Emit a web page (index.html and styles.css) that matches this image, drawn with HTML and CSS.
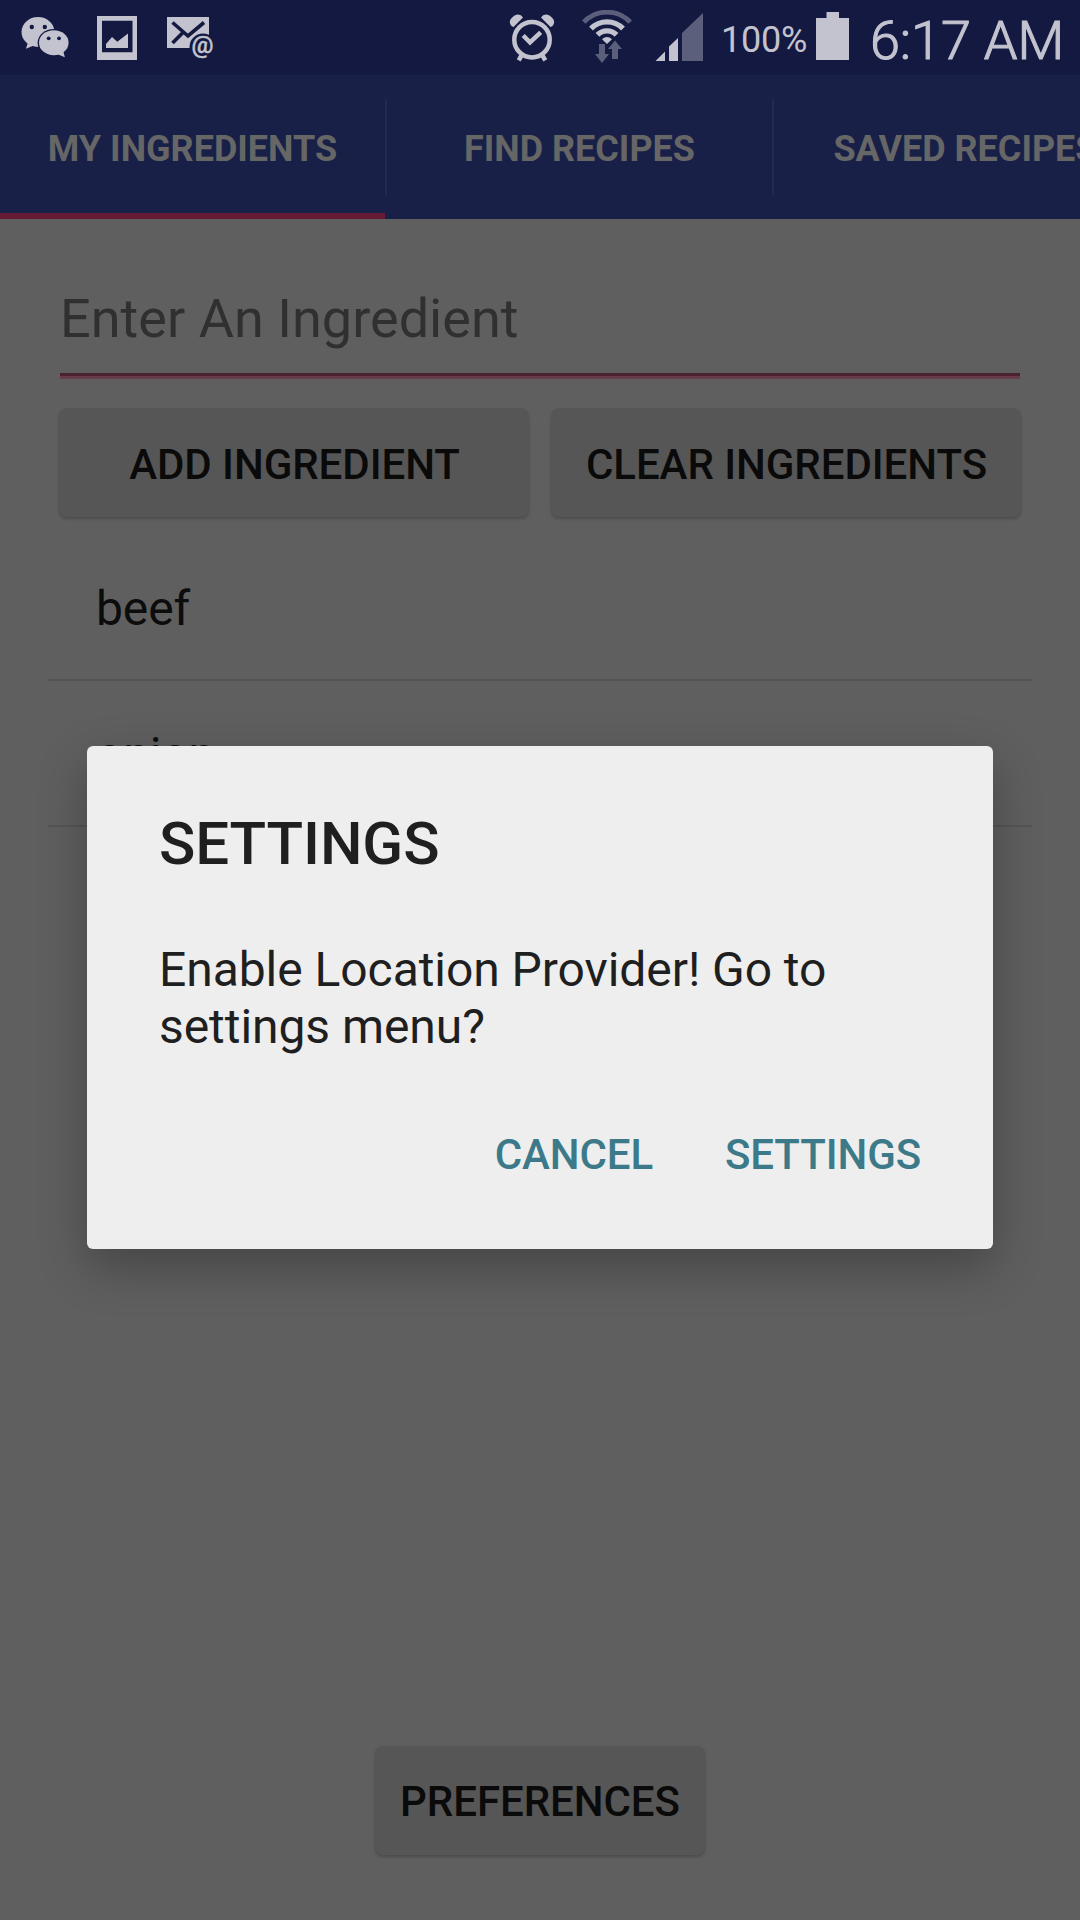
FILE: index.html
```html
<!DOCTYPE html>
<html lang="en">
<head>
<meta charset="utf-8">
<title>My Ingredients</title>
<link rel="stylesheet" href="styles.css">
</head>
<body>
<div class="screen">
  <header class="status-bar">
    <div class="status-left">
      <svg class="icon" width="50" height="44" viewBox="21 17 50 44">
        <ellipse cx="38" cy="33" rx="16.5" ry="15"/>
        <path d="M28 43 L26 49.7 L35 46Z"/>
        <g class="cut"><circle cx="31.8" cy="28" r="2.2"/><circle cx="44.8" cy="28" r="2.2"/><ellipse cx="53.8" cy="43.7" rx="16.2" ry="13.8"/></g>
        <ellipse cx="53.8" cy="43.7" rx="14.8" ry="12.5"/>
        <path d="M57 55 L64.8 58.2 L63 51Z"/>
        <g class="cut"><circle cx="48.7" cy="39.3" r="1.9"/><circle cx="59" cy="39.3" r="1.9"/></g>
      </svg>
      <svg class="icon" width="40" height="44" viewBox="97 16 40 44">
        <path fill-rule="evenodd" d="M97 16H137V60H97ZM102 20.700V52.300H132.500V20.700Z"/>
        <path d="M106 48V44L112 37L117.300 41.800L128 33.500V48Z"/>
      </svg>
      <svg class="icon mail" width="48" height="44" viewBox="167 16 48 44">
        <path d="M167 17H209V48H167Z"/>
        <path class="cut-line" d="M172.500 22.500L188 36L204 22.500M172.500 43L183 32.500"/>
        <circle class="cut" cx="203" cy="47" r="13.500"/>
        <text class="at" x="202.500" y="53" text-anchor="middle">@</text>
      </svg>
    </div>
    <div class="status-right">
      <svg class="icon" width="46" height="50" viewBox="509 12 46 50">
        <circle class="line" cx="532" cy="39.700" r="17.700"/>
        <path d="M513.500 27L523 17.500Q520 12.500 514.500 15.500Q508 20 510.500 24.500Q511.500 26.500 513.500 27ZM550.500 27L541 17.500Q544 12.500 549.500 15.500Q556 20 553.500 24.500Q552.500 26.500 550.500 27Z"/>
        <path class="line" d="M523.200 35.500L530 42.300L540.700 32.300M521.500 55.500L518.700 60.300M542.500 55.500L545.300 60.300"/>
      </svg>
      <svg class="icon wifi" width="50" height="54" viewBox="582 10 50 54">
        <path class="arc-dim" d="M583.800 22.200A31.700 31.700 0 0 1 630.200 22.200"/>
        <path class="arc" d="M591 28.700A22.200 22.200 0 0 1 623 28.700"/>
        <path class="arc" d="M597.500 34.900A13.200 13.200 0 0 1 616.500 34.900"/>
        <path d="M602 39.300Q607 34.700 612 39.300L607 44Z"/>
        <path class="dim" d="M599 44H605V54H609L602 63L595 54H599ZM612 59V49H608L615 40.500L622 49H618V59Z"/>
      </svg>
      <svg class="icon signal" width="48" height="48" viewBox="655 13 48 48">
        <path d="M655.500 61L665 51.500V61ZM669 61V46.500L678 38V61Z"/>
        <path class="dim" d="M682 61V33L703 13V61Z"/>
      </svg>
      <span class="battery-level">100%</span>
      <svg class="icon battery" width="33" height="48" viewBox="816 12 33 48">
        <path d="M816 18H826.500V12H839V18H849V60H816Z"/>
      </svg>
      <span class="clock">6:17 AM</span>
    </div>
  </header>

  <nav class="tabs">
    <div class="tab active">MY INGREDIENTS</div>
    <div class="tab">FIND RECIPES</div>
    <div class="tab">SAVED RECIPES</div>
  </nav>

  <main class="content">
    <div class="field">Enter An Ingredient</div>
    <div class="actions">
      <div class="button">ADD INGREDIENT</div>
      <div class="button">CLEAR INGREDIENTS</div>
    </div>
    <ul class="list">
      <li class="item">beef</li>
      <li class="item">onion</li>
    </ul>
    <div class="button preferences">PREFERENCES</div>
  </main>

  <div class="overlay">
    <section class="dialog">
      <h1 class="dialog-title">SETTINGS</h1>
      <p class="dialog-text">Enable Location Provider! Go to settings menu?</p>
      <div class="dialog-actions">
        <span class="dialog-action">CANCEL</span>
        <span class="dialog-action">SETTINGS</span>
      </div>
    </section>
  </div>
</div>
</body>
</html>
```
FILE: styles.css
```css
* { box-sizing: border-box; }

body {
  margin: 0;
  font-family: Roboto, "Liberation Sans", sans-serif;
  background: #5f5f5f;
}

.screen {
  position: relative;
  display: flex;
  flex-direction: column;
  width: 1080px;
  height: 1920px;
  overflow: hidden;
  background: #5f5f5f;
}

/* Status bar */
.status-bar {
  display: flex;
  justify-content: space-between;
  height: 75px;
  padding: 0 19px 0 21px;
  background: #131940;
  color: #c3c2cf;
}

.status-left,
.status-right { display: flex; align-items: flex-start; }
.status-left { gap: 26px; padding-top: 16px; }
.status-left .mail { margin-left: 4px; }

.icon { display: block; flex: none; fill: #c3c2cf; }
.cut { fill: #131940; }
.cut-line { fill: none; stroke: #131940; stroke-width: 3.6; }
.at {
  font: 500 24.5px Roboto, sans-serif;
  stroke: #c3c2cf;
  stroke-width: .4;
}
.dim { fill: #5b5f7b; }
.line { fill: none; stroke: #c3c2cf; stroke-width: 4.5; }
.arc { fill: none; stroke: #c3c2cf; stroke-width: 5.4; }
.arc-dim { fill: none; stroke: #5b5f7b; stroke-width: 4.8; }

.status-right { padding-top: 12px; }
.wifi { margin: -2px 0 0 27px; }
.signal { margin: 1px 0 0 23px; }
.battery { margin-left: 9px; }
.battery-level {
  width: 86px;
  margin-left: 18px;
  font-size: 36px;
  line-height: 57px;
  letter-spacing: -.2px;
  white-space: nowrap;
}
.clock {
  width: 191px;
  margin-left: 21px;
  font-size: 54px;
  font-weight: 300;
  line-height: 57px;
  letter-spacing: -.1px;
  -webkit-text-stroke: 1.1px #c3c2cf;
  white-space: nowrap;
}

/* Tabs */
.tabs {
  display: flex;
  height: 144px;
  background: #192048;
}
.tab {
  display: flex;
  flex: none;
  align-items: center;
  justify-content: center;
  width: 387px;
  padding: 3px 0 0 2px;
  border: solid transparent;
  border-width: 6px 0;
  background: linear-gradient(#222a50, #222a50) left 18px / 2px 96px no-repeat;
  color: #666;
  font-size: 36px;
  font-weight: 700;
}
.tab:last-child { padding-left: 0; }
.tab.active {
  width: 385px;
  padding-left: 0;
  border-bottom-color: #661a34;
  background: none;
}

/* Content */
.content {
  display: flex;
  flex: 1;
  flex-direction: column;
  padding: 61px 48px 65px;
}
.field {
  height: 99px;
  margin: 0 12px;
  padding-top: 7px;
  border-bottom: 3px solid #673d4c;
  box-shadow: inset 0 -3px #4b2231;
  color: #303030;
  font-size: 54px;
  line-height: 64px;
  letter-spacing: .03px;
}
.actions {
  display: grid;
  grid-template-columns: 1fr 1fr;
  gap: 22px;
  margin: 29px 11px 0;
}
.button {
  display: flex;
  align-items: center;
  justify-content: center;
  height: 109px;
  padding-top: 3px;
  border-radius: 8px;
  background: #565656;
  box-shadow: 0 2px 3px rgba(0, 0, 0, .2);
  color: #0a0a0a;
  font-size: 42px;
  font-weight: 500;
  letter-spacing: -.05px;
}
.actions .button { padding-left: 1px; }
.list {
  margin: 18px 0 0;
  padding: 0;
  list-style: none;
}
.item {
  height: 146px;
  padding: 3px 48px 0;
  border-bottom: 2px solid #545454;
  color: #0c0c0c;
  font-size: 48px;
  line-height: 141px;
  letter-spacing: -.1px;
}
.preferences {
  align-self: center;
  width: 330px;
  margin-top: auto;
  padding-top: 1px;
}

/* Dialog */
.overlay {
  position: absolute;
  inset: 75px 0 0;
  display: grid;
  place-items: center;
}
.dialog {
  width: 906px;
  height: 503px;
  padding: 63px 72px 0;
  border-radius: 6px;
  background: #eee;
  box-shadow: 0 18px 48px rgba(0, 0, 0, .28);
  color: #1f1f1f;
}
.dialog-title {
  margin: 0;
  font-size: 60px;
  font-weight: 500;
  line-height: 70px;
  letter-spacing: -.1px;
}
.dialog-text {
  margin: 62px 0 0;
  font-size: 48px;
  line-height: 57px;
  letter-spacing: -.06px;
}
.dialog-actions {
  display: flex;
  justify-content: flex-end;
  gap: 72px;
  margin-top: 75px;
}
.dialog-action {
  color: #3c7a89;
  font-size: 42px;
  font-weight: 500;
  line-height: 50px;
  letter-spacing: -.1px;
}
```
